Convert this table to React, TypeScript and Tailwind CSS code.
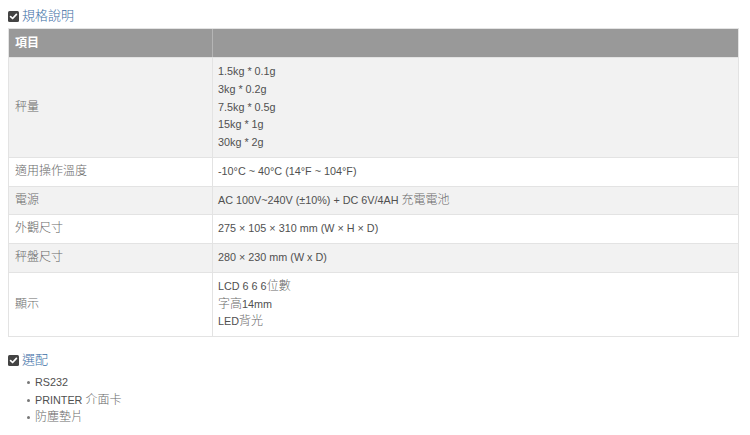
import React from "react";

const font = { fontFamily: '"Liberation Sans", Arial, "Noto Sans CJK TC", sans-serif' };

function T({ s }: { s: string }) {
  const parts = s.split(/([\u3000-\u9fff\uff00-\uffef]+)/);
  return (
    <>
      {parts.map((p, i) =>
        /[\u3000-\u9fff\uff00-\uffef]/.test(p) ? (
          <span key={i} className="text-[12px] leading-none font-light text-[#6a6a6a]">
            {p}
          </span>
        ) : (
          <span key={i}>{p}</span>
        )
      )}
    </>
  );
}

function CheckIcon() {
  return (
    <svg width="11" height="11" viewBox="0 0 11 11" className="shrink-0">
      <rect x="0" y="0" width="11" height="11" rx="1.5" fill="#444" />
      <path d="M2.6 5.6 L4.6 7.5 L8.4 3.4" stroke="#fff" strokeWidth="1.7" fill="none" strokeLinecap="round" strokeLinejoin="round" />
    </svg>
  );
}

const rows: { k: string; v: string[]; alt: boolean }[] = [
  { k: "秤量", v: ["1.5kg * 0.1g", "3kg * 0.2g", "7.5kg * 0.5g", "15kg * 1g", "30kg * 2g"], alt: true },
  { k: "適用操作溫度", v: ["-10°C ~ 40°C (14°F ~ 104°F)"], alt: false },
  { k: "電源", v: ["AC 100V~240V (±10%) + DC 6V/4AH 充電電池"], alt: true },
  { k: "外觀尺寸", v: ["275 × 105 × 310 mm (W × H × D)"], alt: false },
  { k: "秤盤尺寸", v: ["280 × 230 mm (W x D)"], alt: true },
  { k: "顯示", v: ["LCD 6 6 6位數", "字高14mm", "LED背光"], alt: false },
];

export default function App() {
  return (
    <div className="w-[750px] h-[435px] bg-white text-[10.8px] text-[#505050] px-2 pt-[6px]" style={font}>
      <div className="flex items-center gap-[3px] h-[20px] text-[13px] text-[#3a6ea5]">
        <CheckIcon />
        <span className="font-light">規格說明</span>
      </div>
      <div className="mt-[2px] w-[731px] border border-[#e3e3e3]">
        <div className="flex bg-[#999999] text-white font-bold text-[12px] h-[28px] leading-[28px]">
          <div className="w-[204px] px-[6px] border-r border-[#b5b5b5]">項目</div>
          <div className="flex-1"></div>
        </div>
        {rows.map((r, i) => (
          <div
            key={i}
            className={`flex border-t border-[#e3e3e3] leading-[17.75px] ${r.alt ? "bg-[#f2f2f2]" : "bg-white"}`}
          >
            <div className="w-[204px] px-[6px] py-[5px] flex items-center border-r border-[#e3e3e3]">
              <div>
                <T s={r.k} />
              </div>
            </div>
            <div className="flex-1 px-[5px] py-[5px]">
              {r.v.map((t, j) => (
                <div key={j}>
                  <T s={t} />
                </div>
              ))}
            </div>
          </div>
        ))}
      </div>
      <div className="mt-[13px] flex items-center gap-[3px] h-[20px] text-[13px] text-[#3a6ea5]">
        <CheckIcon />
        <span className="font-light">選配</span>
      </div>
      <ul className="mt-[4px] pl-[19px] leading-[17.5px] text-[10.8px] text-[#505050]">
        {["RS232", "PRINTER 介面卡", "防塵墊片"].map((t) => (
          <li key={t} className="flex items-center gap-[5px]">
            <span className="w-[3px] h-[3px] rounded-full bg-[#777] inline-block" />
            <span>
              <T s={t} />
            </span>
          </li>
        ))}
      </ul>
    </div>
  );
}
